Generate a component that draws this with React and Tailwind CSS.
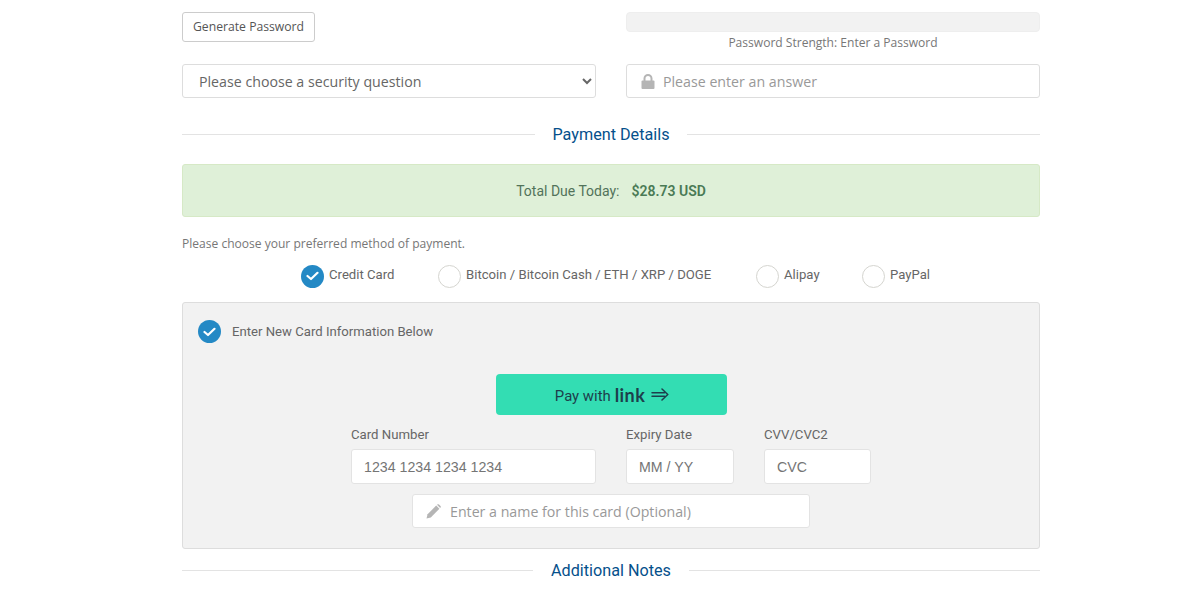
import React from 'react';

const openSans = { fontFamily: '"Open Sans", sans-serif' };

const CheckCircle = ({ checked }) =>
  checked ? (
    <span className="w-[23px] h-[23px] rounded-full bg-[#2489c5] flex items-center justify-center shrink-0">
      <svg width="13" height="10" viewBox="0 0 13 10" fill="none">
        <path d="M1.5 5 L5 8 L11.5 1.8" stroke="#fff" strokeWidth="2.2" strokeLinecap="round" strokeLinejoin="round" />
      </svg>
    </span>
  ) : (
    <span className="w-[23px] h-[23px] rounded-full bg-white border border-[#d5d5d0] shrink-0" />
  );

const LockIcon = () => (
  <svg width="14" height="15" viewBox="0 0 14 15" className="shrink-0">
    <path d="M3.5 7 V4.5 a3.5 3.5 0 0 1 7 0 V7" fill="none" stroke="#b5b5b5" strokeWidth="2" />
    <rect x="0.5" y="6.5" width="13" height="8.5" rx="1" fill="#b5b5b5" />
  </svg>
);

const PencilIcon = () => (
  <svg width="15" height="15" viewBox="0 0 15 15" className="shrink-0">
    <path d="M0.5 14.5 L1.6 10.2 L10.2 1.6 L13.4 4.8 L4.8 13.4 Z" fill="#b5b5b5" />
    <path d="M11 0.8 L11.8 0.3 Q12.4 0 13 0.5 L14.5 2 Q15 2.6 14.7 3.2 L14.2 4 Z" fill="#b5b5b5" />
  </svg>
);

const SectionTitle = ({ title, gap }) => (
  <div className="flex items-center">
    <div className="flex-1 h-px bg-[#e3e3e3]" />
    <h2 className={`text-[#05508b] text-[16.2px] leading-[22px] font-normal pt-[2px] ${gap}`}>{title}</h2>
    <div className="flex-1 h-px bg-[#e3e3e3]" />
  </div>
);

const PayOption = ({ label, checked, className, textClass = '-mt-[2px]' }) => (
  <label className={`flex items-center gap-[5px] text-[13.15px] text-[#666] ${className}`}>
    <CheckCircle checked={checked} />
    <span className={textClass}>{label}</span>
  </label>
);

const CardField = ({ label, placeholder, width }) => (
  <div className={width}>
    <div className="text-[13.2px] leading-[15px] text-[#666] mb-[7px]">{label}</div>
    <input
      placeholder={placeholder}
      className="w-full h-[35px] bg-white border border-[#e3e3e3] rounded-[3px] px-3 text-[14.2px] outline-none placeholder:text-[#757575]"
      style={{ fontFamily: '"Liberation Sans", sans-serif' }}
    />
  </div>
);

export default function App() {
  return (
    <div className="bg-white h-[597px] overflow-hidden" style={{ fontFamily: 'Roboto, sans-serif' }}>
      <div className="w-[858px] ml-[182px] pt-3">
        {/* Password row */}
        <div className="grid grid-cols-2 gap-x-[30px]" style={openSans}>
          <div>
            <button className="h-[30px] px-[10px] bg-white border border-[#ccc] rounded-[3px] text-[12.2px] text-[#555]">
              Generate Password
            </button>
          </div>
          <div className="text-center">
            <div className="h-5 bg-[#f2f2f2] border border-[#eee] rounded-[4px]" />
            <div className="text-[12.05px] leading-[17px] text-[#777] mt-[2px]">Password Strength: Enter a Password</div>
          </div>
        </div>

        <div className="grid grid-cols-2 gap-x-[30px] mt-[13px]" style={openSans}>
          <select className="h-[34px] bg-white border border-[#ddd] rounded-[3px] pl-3 text-[14.2px] text-[#666] outline-none">
            <option>Please choose a security question</option>
          </select>
          <div className="h-[34px] bg-white border border-[#ddd] rounded-[3px] flex items-center pl-[14px] gap-2">
            <LockIcon />
            <input placeholder="Please enter an answer" className="flex-1 text-[14.2px] outline-none placeholder:text-[#999] mt-px" />
          </div>
        </div>

        <div className="mt-[24px]">
          <SectionTitle title="Payment Details" gap="px-[17px]" />
        </div>

        {/* Total due */}
        <div className="mt-[18px] h-[53px] bg-[#dff0d8] border border-[#d6e9c6] rounded-[3px] flex items-center justify-center text-sm">
          <span className="text-[#52735a]">Total Due Today:</span>
          <strong className="ml-[12px] font-semibold text-[#4a7a55]">$28.73 USD</strong>
        </div>

        <p className="mt-[18px] text-[12.05px] leading-[17px] text-[#777]" style={openSans}>
          Please choose your preferred method of payment.
        </p>

        <div className="mt-[12px] flex items-center h-[24px] pl-[119px]">
          <PayOption label="Credit Card" checked className="w-[137px]" />
          <PayOption label="Bitcoin / Bitcoin Cash / ETH / XRP / DOGE" className="w-[318px]" />
          <PayOption label="Alipay" className="w-[106px]" />
          <PayOption label="PayPal" />
        </div>

        {/* Card panel */}
        <div className="mt-[14px] h-[247px] bg-[#f2f2f2] border border-[#ddd] rounded-[3px] pt-[17px]">
          <div className="pl-[15px]">
            <PayOption label="Enter New Card Information Below" checked className="gap-[11px]" textClass="" />
          </div>

          <div className="mt-[31px] flex justify-center">
            <button className="w-[231px] h-[41px] pl-[2px] bg-[#33ddb3] rounded-[4px] flex items-center justify-center text-[#1d3f4c] text-[14.9px]">
              <span className="mt-[3px]">Pay with</span>
              <span className="ml-[4px] font-bold text-[18px] leading-none tracking-[0.4px]" style={{ fontFamily: 'Lato, sans-serif' }}>link</span>
              <svg width="18" height="13" viewBox="0 0 18 13" fill="none" stroke="#1d3f4c" strokeWidth="1.5" strokeLinecap="round" strokeLinejoin="round" className="ml-[6px]">
                <path d="M1 4.7 H13.5 M1 8.3 H13.5 M11 1 L16.8 6.5 L11 12" />
              </svg>
            </button>
          </div>

          <div className="mt-[12px] flex pl-[168px]">
            <CardField label="Card Number" placeholder="1234 1234 1234 1234" width="w-[245px]" />
            <CardField label="Expiry Date" placeholder="MM / YY" width="w-[108px] ml-[30px]" />
            <CardField label="CVV/CVC2" placeholder="CVC" width="w-[107px] ml-[30px]" />
          </div>

          <div className="mt-[10px] flex justify-center">
            <div className="w-[398px] h-[34px] bg-white border border-[#e3e3e3] rounded-[3px] flex items-center pl-[13px] gap-[9px]" style={openSans}>
              <PencilIcon />
              <input placeholder="Enter a name for this card (Optional)" className="flex-1 text-[14.2px] outline-none placeholder:text-[#999] mt-px" />
            </div>
          </div>
        </div>

        <div className="mt-[9px]">
          <SectionTitle title="Additional Notes" gap="px-[18px]" />
        </div>
      </div>
    </div>
  );
}
